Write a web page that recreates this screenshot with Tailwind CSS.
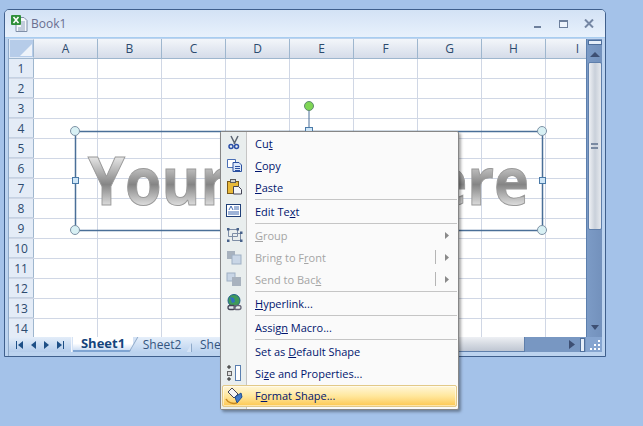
<!DOCTYPE html>
<html lang="en">
<head>
<meta charset="UTF-8">
<title>Book1</title>
<script src="https://cdn.jsdelivr.net/npm/@tailwindcss/browser@4"></script>
</head>
<body class="relative w-[643px] h-[426px] overflow-hidden bg-[#a4c2e9] font-['Open_Sans',sans-serif]">
	<!-- Workbook window -->
	<div class="ml-[4px] pt-[9px] w-[602px]">
		<div class="h-[348px] flex flex-col rounded-t-[5px] border border-[#3f5f8c] bg-[#bcd3ef]">
			<!-- Title bar -->
			<header class="h-[28px] shrink-0 flex items-center pl-[6px] rounded-t-[4px] bg-linear-to-b from-[#d3e2f5] to-[#e8f1fc] border-b border-[#a8cdf0]">
				<svg class="w-[17px] h-[17px]" viewBox="0 0 17 17">
					<path d="M5 2.500h8l3 3v11H5z" fill="#f4f7fb" stroke="#7f8fa8"/>
					<path d="M10 7h4M10 9h4M10 11h4M7 13h7M7 15h7" stroke="#8fa2be"/>
					<rect x="0" y="0" width="10" height="10" rx="1" fill="#2f8f3a"/>
					<path d="M2.500 2l5 6M7.500 2l-5 6" stroke="#fff" stroke-width="1.600"/>
				</svg>
				<span class="ml-[3px] text-[12px] leading-none text-[#6a6e90]">Book1</span>
				<div class="ml-auto flex items-center">
					<span class="w-[7px] h-[2px] mt-[7px] mr-[18px] bg-[#6d7f9c]"></span>
					<span class="w-[9px] h-[8px] mr-[16px] border border-[#6d7f9c] border-t-[2px] bg-[#eef4fc]"></span>
					<svg class="w-[10px] h-[9px] mr-[11px]" viewBox="0 0 10 9"><path d="M1 .5l8 8M9 .5l-8 8" stroke="#7587a4" stroke-width="2"/></svg>
				</div>
			</header>
			<!-- Sheet -->
			<div class="flex-1 flex flex-col mx-[3px] mt-[1px] border-l border-[#8ea9c9]">
				<div class="flex h-[298px]">
					<div class="w-[577px] shrink-0 bg-white overflow-hidden text-[12px] leading-none text-[#2c4a6e]">
						<div class="flex h-[20px] border-b border-[#9eb6ce]">
							<div class="w-[25px] shrink-0 relative bg-[#b6cce9] border border-[#dfe9f6] border-r-[#9eb6ce]">
								<svg class="absolute right-[1px] bottom-[1px] w-[12px] h-[12px]" viewBox="0 0 12 12"><path d="M12 0v12H0z" fill="#eef3fa"/></svg>
							</div>
							<div id="cols" class="contents"></div>
						</div>
						<div id="rows"></div>
					</div>
					<!-- Vertical scroll bar -->
					<div class="w-[16px] shrink-0 flex flex-col items-center bg-linear-to-r from-[#7c9bc6] to-[#7391bc] border-l border-[#5c7fae]">
						<div class="w-[14px] h-[5px] mt-[1px] bg-[#e6eef9] border border-[#4f6f9c]"></div>
						<svg class="w-[14px] h-[17px] shrink-0" viewBox="0 0 14 17"><path d="M2 12l5-5 5 5z" fill="#3d4f73"/></svg>
						<div class="w-[14px] h-[168px] shrink-0 flex items-center justify-center rounded-[2px] bg-linear-to-r from-[#eef0f4] via-[#c9d0da] to-[#e6e9ee] border border-[#5f7fab]">
							<div class="w-[7px] h-[6px] border-y-2 border-double border-[#7a8aa2]"></div>
						</div>
						<svg class="w-[14px] h-[12px] mt-auto mb-[3px] shrink-0" viewBox="0 0 14 12"><path d="M3 3h8l-4 5z" fill="#3d4f73"/></svg>
					</div>
				</div>
				<!-- Sheet tabs and horizontal scroll bar -->
				<div class="flex h-[15px] bg-[#d5e3f5] text-[12px] leading-none">
					<div class="w-[63px] flex items-center justify-around px-[3px] bg-linear-to-b from-[#e3edf9] to-[#b5cdec] border-r border-[#f3f7fd]">
						<svg class="w-[7px] h-[8px]" viewBox="0 0 7 8"><path d="M0 0h1v8H0zM7 0v8L2 4z" fill="#1e4f86"/></svg>
						<svg class="w-[5px] h-[8px]" viewBox="0 0 5 8"><path d="M5 0v8L0 4z" fill="#1e4f86"/></svg>
						<svg class="w-[5px] h-[8px]" viewBox="0 0 5 8"><path d="M0 0v8l5-4z" fill="#1e4f86"/></svg>
						<svg class="w-[7px] h-[8px]" viewBox="0 0 7 8"><path d="M0 0v8l5-4zM6 0h1v8H6z" fill="#1e4f86"/></svg>
					</div>
					<div class="w-[60px] ml-[1px] flex items-center justify-center font-bold text-[13px] text-[#15447c] bg-linear-to-b from-white via-white to-[#cfdff4] border-b-2 border-[#7fa4d2]">Sheet1</div>
					<div class="w-[58px] flex items-center justify-center text-[#34557f] bg-linear-to-b from-[#e6effa] to-[#bcd3ef] border-l border-[#8ea9c9] skew-x-[-30deg]"><span class="skew-x-[30deg]">Sheet2</span></div>
					<div class="w-[58px] flex items-center pl-[8px] text-[#34557f] bg-linear-to-b from-[#e6effa] to-[#bcd3ef] border-l border-[#8ea9c9]">Sheet3</div>
					<div class="w-[320px] flex bg-[#7897c2]">
						<div class="w-[276px] bg-linear-to-b from-[#eef0f4] via-[#d5dae2] to-[#bfc6d2] border-b border-r border-[#5f7fab]"></div>
					</div>
					<div class="flex-1 flex items-center justify-between bg-[#7897c2] pr-[1px]">
						<svg class="w-[6px] h-[9px]" viewBox="0 0 6 9"><path d="M0 0v9l6-4.500z" fill="#3d4f73"/></svg>
						<span class="w-[5px] h-[14px] bg-[#e6eef9] border border-[#4f6f9c]"></span>
					</div>
					<div class="w-[16px] relative bg-[#86a5d0]">
						<svg class="absolute right-[1px] bottom-[1px] w-[12px] h-[12px]" viewBox="0 0 12 12"><path d="M9 1h2v2H9zM5 5h2v2H5zM9 5h2v2H9zM1 9h2v2H1zM5 9h2v2H5zM9 9h2v2H9z" fill="#fff"/></svg>
					</div>
				</div>
			</div>
		</div>
	</div>

	<!-- WordArt shape, free on the sheet -->
	<svg class="absolute left-0 top-0" width="643" height="426" viewBox="0 0 643 426">
		<defs>
			<linearGradient id="art" gradientUnits="userSpaceOnUse" x1="0" y1="157" x2="0" y2="207">
				<stop offset="0" stop-color="#e6e6e6"/>
				<stop offset="0.55" stop-color="#858585"/>
				<stop offset="1" stop-color="#e4e4e4"/>
			</linearGradient>
		</defs>
		<rect x="75.500" y="131.500" width="467" height="99" fill="none" stroke="#4a6f98" stroke-width="1.500"/>
		<path d="M309 110v20" stroke="#4a6f98"/>
		<text x="88" y="205" font-family="'Open Sans',sans-serif" font-weight="700" font-size="66" textLength="441" lengthAdjust="spacingAndGlyphs" fill="url(#art)" stroke="#9a9a9a" stroke-width="1">Your Text Here</text>
		<g fill="#d8f0f4" stroke="#7f93a6">
			<circle cx="75" cy="131" r="4.500"/><circle cx="542" cy="131" r="4.500"/>
			<circle cx="75" cy="230" r="4.500"/><circle cx="542" cy="230" r="4.500"/>
		</g>
		<g fill="#cfe6f7" stroke="#4a7aa8">
			<rect x="72.500" y="177.500" width="6" height="6"/><rect x="539.500" y="177.500" width="6" height="6"/><rect x="305.500" y="127.500" width="7" height="6"/>
		</g>
		<circle cx="309" cy="106" r="4.500" fill="#7fd655" stroke="#5f8a70"/>
	</svg>

	<!-- Context menu -->
	<div class="absolute left-[220px] top-[131px] w-[239px] h-[279px] pt-[1px] bg-[#fafafa] border border-[#868686] rounded-[2px] shadow-[2px_2px_3px_rgba(0,0,0,.35)] text-[11px] leading-none text-[#00156e]">
		<div class="absolute left-0 top-0 bottom-0 w-[26px] bg-[#e9eeee] border-r border-[#c5c5c5]"></div>
		<ul class="relative">
			<li class="h-[22px] flex items-center pb-[2px]">
				<svg class="w-[26px] h-[18px]" viewBox="0 0 26 18"><path d="M10 2l4 8M17 2l-4 8" stroke="#5a6472" stroke-width="1.500"/><circle cx="10" cy="12.500" r="2" fill="none" stroke="#2b4fa8" stroke-width="1.500"/><circle cx="15.500" cy="12.500" r="2" fill="none" stroke="#2b4fa8" stroke-width="1.500"/></svg>
				<span class="ml-[8px]">Cu<u>t</u></span>
			</li>
			<li class="h-[22px] flex items-center pb-[2px]">
				<svg class="w-[26px] h-[18px]" viewBox="0 0 26 18"><path d="M6.500 3.500h8v8h-8z" fill="#fff" stroke="#4a6fb5"/><path d="M12 6.500h6l2.500 2.500v6.500H12z" fill="#dce8fa" stroke="#2b50a0"/><path d="M14 10.500h5M14 12.500h5M14 14.500h5" stroke="#2b50a0"/></svg>
				<span class="ml-[8px]"><u>C</u>opy</span>
			</li>
			<li class="h-[22px] flex items-center pb-[2px]">
				<svg class="w-[26px] h-[18px]" viewBox="0 0 26 18"><rect x="6.500" y="3.500" width="11" height="12" fill="#e8b93a" stroke="#7a5a1a"/><rect x="9.500" y="1.500" width="5" height="3" fill="#d0d0d0" stroke="#5a5a5a"/><path d="M12.500 8.500h5l3 3v4.500h-8z" fill="#f4f6fa" stroke="#445"/></svg>
				<span class="ml-[8px]"><u>P</u>aste</span>
			</li>
			<li class="h-[2px] ml-[34px] mr-[1px] border-t border-[#c5c5c5]"></li>
			<li class="h-[22px] flex items-center pb-[2px]">
				<svg class="w-[26px] h-[18px]" viewBox="0 0 26 18"><rect x="5.500" y="2.500" width="14" height="12" fill="#fff" stroke="#1f3f78"/><path d="M8 8l2-4 2 4M13 5h5M13 7h5M7 10h11M7 12h11" fill="none" stroke="#3f68b0"/></svg>
				<span class="ml-[8px]">Edit Te<u>x</u>t</span>
			</li>
			<li class="h-[2px] ml-[34px] mr-[1px] border-t border-[#c5c5c5]"></li>
			<li class="h-[22px] flex items-center pb-[2px] text-[#a5a5a5]">
				<svg class="w-[26px] h-[18px]" viewBox="0 0 26 18"><path d="M7.500 3.500h9v7h-9zM11.500 7.500h8v7h-8z" fill="none" stroke="#7e8ea6"/><path d="M6 2h2.500v2.500H6zM15.500 2H18v2.500h-2.500zM6 13.500h2.500V16H6zM19 13.500h2.500V16H19zM19 5.500h2.500V8H19z" fill="#47618a"/></svg>
				<span class="ml-[8px]"><u>G</u>roup</span>
				<svg class="ml-auto mr-[9px] w-[4px] h-[7px]" viewBox="0 0 4 7"><path d="M0 0v7l4-3.500z" fill="#8a8a8a"/></svg>
			</li>
			<li class="h-[22px] flex items-center pb-[2px] text-[#a5a5a5]">
				<svg class="w-[26px] h-[18px]" viewBox="0 0 26 18"><rect x="6" y="3" width="8" height="8" fill="#a8b2be"/><rect x="11" y="7" width="9" height="9" fill="#c9d6e6" stroke="#9fb0c4"/></svg>
				<span class="ml-[8px]">Bring to F<u>r</u>ont</span>
				<span class="ml-auto mr-[9px] w-[1px] h-[14px] bg-[#b5b5b5]"></span>
				<svg class="mr-[9px] w-[4px] h-[7px]" viewBox="0 0 4 7"><path d="M0 0v7l4-3.500z" fill="#8a8a8a"/></svg>
			</li>
			<li class="h-[22px] flex items-center pb-[2px] text-[#a5a5a5]">
				<svg class="w-[26px] h-[18px]" viewBox="0 0 26 18"><rect x="6" y="3" width="8" height="8" fill="#c9d6e6" stroke="#9fb0c4"/><rect x="11" y="7" width="9" height="9" fill="#a8b2be"/></svg>
				<span class="ml-[8px]">Send to Bac<u>k</u></span>
				<span class="ml-auto mr-[9px] w-[1px] h-[14px] bg-[#b5b5b5]"></span>
				<svg class="mr-[9px] w-[4px] h-[7px]" viewBox="0 0 4 7"><path d="M0 0v7l4-3.500z" fill="#8a8a8a"/></svg>
			</li>
			<li class="h-[2px] ml-[34px] mr-[1px] border-t border-[#c5c5c5]"></li>
			<li class="h-[22px] flex items-center pb-[2px]">
				<svg class="w-[26px] h-[18px]" viewBox="0 0 26 18"><circle cx="13" cy="6.500" r="6" fill="#3f9a5a" stroke="#1f5f8a"/><path d="M9 3l4 1 1 4-3 1z" fill="#2f6fc0"/><rect x="7" y="11.500" width="7" height="4" rx="2" fill="#dfe6ee" stroke="#445" stroke-width="1.300"/><rect x="13" y="11.500" width="7" height="4" rx="2" fill="none" stroke="#667" stroke-width="1.300"/></svg>
				<span class="ml-[8px]"><u>H</u>yperlink...</span>
			</li>
			<li class="h-[2px] ml-[34px] mr-[1px] border-t border-[#c5c5c5]"></li>
			<li class="h-[22px] flex items-center pb-[2px] pl-[26px]"><span class="ml-[8px]">Assig<u>n</u> Macro...</span></li>
			<li class="h-[2px] ml-[34px] mr-[1px] border-t border-[#c5c5c5]"></li>
			<li class="h-[22px] flex items-center pb-[2px] pl-[26px]"><span class="ml-[8px]">Set as <u>D</u>efault Shape</span></li>
			<li class="h-[22px] flex items-center pb-[2px]">
				<svg class="w-[26px] h-[18px]" viewBox="0 0 26 18"><rect x="14.500" y="1.500" width="5" height="15" fill="#fff" stroke="#5a7fb0"/><path d="M8 1v4M6 3h4M8 13v4M6 15h4" stroke="#222"/><rect x="6.500" y="7.500" width="4" height="4" fill="#ddd" stroke="#666"/></svg>
				<span class="ml-[8px]">Si<u>z</u>e and Properties...</span>
			</li>
			<li class="h-[22px] mx-[1px] flex items-center pb-[1px] rounded-[2px] border border-[#e2c988] bg-linear-to-b from-[#fff6d8] via-[#ffe79c] to-[#fdc84f] shadow-[inset_0_0_0_1px_rgba(255,255,255,.5)]">
				<svg class="w-[24px] h-[18px]" viewBox="0 0 24 18"><path d="M5 5l4-4 6 6-4 4z" fill="#f4f4f4" stroke="#445"/><path d="M12 10l6-4 1 4-5 6z" fill="#3f78c8" stroke="#1f4f90"/><path d="M3 12c2 4 7 5 11 4" fill="none" stroke="#c88a20" stroke-width="1.500"/></svg>
				<span class="ml-[8px]">F<u>o</u>rmat Shape...</span>
			</li>
		</ul>
	</div>

	<script>
		// fill the sheet: lines in the cells are the whole content
		const names = ['A', 'B', 'C', 'D', 'E', 'F', 'G', 'H', 'I']
		const colClass = 'w-[64px] shrink-0 flex items-center justify-center pt-[1px] bg-linear-to-b from-[#f3f6fa] to-[#d5dce9] border-r border-[#9eb6ce]'
		document.getElementById('cols').innerHTML = names.map(n => `<div class="${colClass}">${n}</div>`).join('')
		const cellClass = 'w-[64px] shrink-0 border-r border-[#d0d7e5]'
		const cells = names.map(() => `<div class="${cellClass}"></div>`).join('')
		let html = ''
		for (let i = 1; i <= 14; i++) {
			html += `<div class="flex h-[20px] border-b border-[#d0d7e5]"><div class="w-[25px] shrink-0 flex items-center justify-center pt-[2px] bg-[#e4ecf7] border-r border-[#9eb6ce] border-b border-b-[#c5d2e3]">${i}</div>${cells}</div>`
		}
		document.getElementById('rows').innerHTML = html
	</script>
</body>
</html>
